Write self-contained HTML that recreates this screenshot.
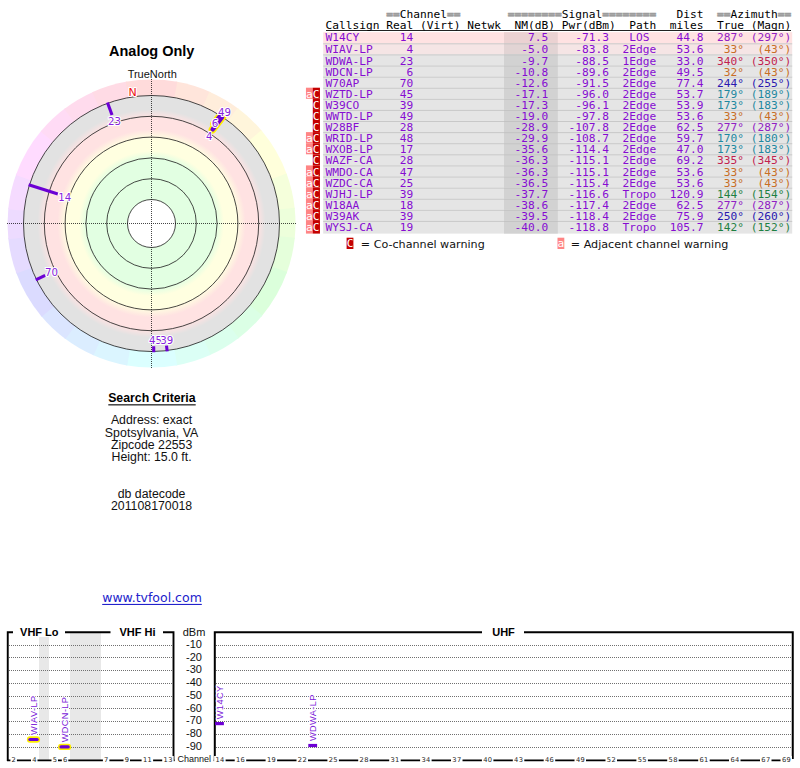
<!DOCTYPE html>
<html lang="en"><head><meta charset="utf-8"><title>TV Fool - Analog Only</title>
<style>
html,body{margin:0;padding:0;background:#fff;}
body{width:800px;height:768px;overflow:hidden;position:relative;}
svg{position:absolute;left:0;top:0;display:block;}
.ar{font-family:"Liberation Sans",sans-serif;}
.dj{font-family:"DejaVu Sans","Liberation Sans",sans-serif;}
.mono{font-family:"DejaVu Sans Mono","Liberation Mono",monospace;font-size:10.0px;}
.halo{paint-order:stroke;stroke:#fff;stroke-width:2.2px;stroke-linejoin:round;}
</style></head><body>
<svg width="800" height="768" viewBox="0 0 800 768">
<defs>
<radialGradient id="zones" gradientUnits="userSpaceOnUse" cx="151.5" cy="223.5" r="128">
<stop offset="0.0000" stop-color="#E2FFE2"/>
<stop offset="0.5078" stop-color="#E2FFE2"/>
<stop offset="0.5664" stop-color="#FFFFE0"/>
<stop offset="0.6641" stop-color="#FFFFE0"/>
<stop offset="0.7344" stop-color="#FFE2E2"/>
<stop offset="0.8281" stop-color="#FFE2E2"/>
<stop offset="0.8906" stop-color="#E2E2E2"/>
<stop offset="1.0000" stop-color="#E2E2E2"/>
</radialGradient>
</defs>
<g id="radar">
<path d="M151.50 223.50 L175.76 81.56 A144 144 0 0 1 210.76 92.26 Z" fill="#FFE5DB"/>
<path d="M151.50 223.50 L209.38 91.64 A144 144 0 0 1 238.76 108.95 Z" fill="#FFEDDB"/>
<path d="M151.50 223.50 L237.56 108.04 A144 144 0 0 1 262.29 131.52 Z" fill="#FFF5DB"/>
<path d="M151.50 223.50 L261.32 130.36 A144 144 0 0 1 287.07 174.96 Z" fill="#FFFFDB"/>
<path d="M151.50 223.50 L286.56 173.54 A144 144 0 0 1 294.79 209.20 Z" fill="#F5FFDB"/>
<path d="M151.50 223.50 L294.63 207.70 A144 144 0 0 1 294.63 239.30 Z" fill="#EDFFDB"/>
<path d="M151.50 223.50 L294.79 237.80 A144 144 0 0 1 286.56 273.46 Z" fill="#E5FFDB"/>
<path d="M151.50 223.50 L287.07 272.04 A144 144 0 0 1 261.32 316.64 Z" fill="#DBFFDB"/>
<path d="M151.50 223.50 L262.29 315.48 A144 144 0 0 1 237.56 338.96 Z" fill="#DBFFE5"/>
<path d="M151.50 223.50 L238.76 338.05 A144 144 0 0 1 209.38 355.36 Z" fill="#DBFFED"/>
<path d="M151.50 223.50 L210.76 354.74 A144 144 0 0 1 175.76 365.44 Z" fill="#DBFFF5"/>
<path d="M151.50 223.50 L177.25 365.18 A144 144 0 0 1 125.75 365.18 Z" fill="#DBFFFF"/>
<path d="M151.50 223.50 L127.24 365.44 A144 144 0 0 1 92.24 354.74 Z" fill="#DBF5FF"/>
<path d="M151.50 223.50 L93.62 355.36 A144 144 0 0 1 64.24 338.05 Z" fill="#DBEDFF"/>
<path d="M151.50 223.50 L65.44 338.96 A144 144 0 0 1 40.71 315.48 Z" fill="#DBE5FF"/>
<path d="M151.50 223.50 L41.68 316.64 A144 144 0 0 1 15.93 272.04 Z" fill="#DBDBFF"/>
<path d="M151.50 223.50 L16.44 273.46 A144 144 0 0 1 8.21 237.80 Z" fill="#E5DBFF"/>
<path d="M151.50 223.50 L8.37 239.30 A144 144 0 0 1 8.37 207.70 Z" fill="#EDDBFF"/>
<path d="M151.50 223.50 L8.21 209.20 A144 144 0 0 1 16.44 173.54 Z" fill="#F5DBFF"/>
<path d="M151.50 223.50 L15.93 174.96 A144 144 0 0 1 41.68 130.36 Z" fill="#FFDBFF"/>
<path d="M151.50 223.50 L40.71 131.52 A144 144 0 0 1 65.44 108.04 Z" fill="#FFDBF5"/>
<path d="M151.50 223.50 L64.24 108.95 A144 144 0 0 1 93.62 91.64 Z" fill="#FFDBED"/>
<path d="M151.50 223.50 L92.24 92.26 A144 144 0 0 1 127.24 81.56 Z" fill="#FFDBE5"/>
<path d="M151.50 223.50 L125.75 81.82 A144 144 0 0 1 177.25 81.82 Z" fill="#FFDBDB"/>
<circle cx="151.5" cy="223.5" r="128" fill="url(#zones)"/>
<circle cx="151.5" cy="223.5" r="24" fill="#fff"/>
<circle cx="151.5" cy="223.5" r="24" fill="none" stroke="#1A1A1A" stroke-width="0.8"/>
<circle cx="151.5" cy="223.5" r="44.8" fill="none" stroke="#1A1A1A" stroke-width="0.8"/>
<circle cx="151.5" cy="223.5" r="65.6" fill="none" stroke="#1A1A1A" stroke-width="0.8"/>
<circle cx="151.5" cy="223.5" r="86.4" fill="none" stroke="#1A1A1A" stroke-width="0.8"/>
<circle cx="151.5" cy="223.5" r="107.2" fill="none" stroke="#1A1A1A" stroke-width="0.8"/>
<circle cx="151.5" cy="223.5" r="128" fill="none" stroke="#1A1A1A" stroke-width="0.8"/>
<line x1="7" y1="223.5" x2="296" y2="223.5" stroke="#000" stroke-opacity="0.72" stroke-width="1" stroke-dasharray="1 1" shape-rendering="crispEdges"/>
<line x1="151.5" y1="79" x2="151.5" y2="368" stroke="#000" stroke-opacity="0.72" stroke-width="1" stroke-dasharray="1 1" shape-rendering="crispEdges"/>
<line x1="222.33" y1="116.89" x2="212.45" y2="129.65" stroke="#FFEE00" stroke-width="7.6" stroke-linecap="round"/>
<line x1="220.46" y1="115.67" x2="213.87" y2="123.68" stroke="#FFEE00" stroke-width="7.6" stroke-linecap="round"/>
<line x1="28.66" y1="184.77" x2="57.84" y2="193.97" stroke="#6C00D4" stroke-width="3.1" stroke-linecap="butt"/>
<line x1="222.11" y1="117.22" x2="212.66" y2="129.32" stroke="#6C00D4" stroke-width="4.4" stroke-linecap="round"/>
<line x1="107.45" y1="102.47" x2="112.03" y2="115.06" stroke="#6C00D4" stroke-width="3.1" stroke-linecap="butt"/>
<line x1="220.25" y1="116.00" x2="214.08" y2="123.35" stroke="#6C00D4" stroke-width="4.4" stroke-linecap="round"/>
<line x1="35.74" y1="279.96" x2="45.17" y2="275.36" stroke="#6C00D4" stroke-width="3.1" stroke-linecap="butt"/>
<line x1="153.75" y1="352.28" x2="153.64" y2="346.28" stroke="#6C00D4" stroke-width="3.1" stroke-linecap="butt"/>
<line x1="167.20" y1="351.34" x2="166.49" y2="345.58" stroke="#6C00D4" stroke-width="3.1" stroke-linecap="butt"/>
<line x1="221.65" y1="115.48" x2="219.42" y2="118.92" stroke="#6C00D4" stroke-width="3.1" stroke-linecap="butt"/>
<g class="dj halo" font-size="10.2" fill="#8822DD" text-anchor="middle">
<text x="64.8" y="200.7">14</text>
<text x="114.5" y="124.9">23</text>
<text x="51.5" y="276.3">70</text>
<text x="155.6" y="343.7">45</text>
<text x="166.7" y="343.7">39</text>
<text x="209.3" y="140.1">4</text>
<text x="224.6" y="116.3">49</text>
<text x="215.0" y="127.3">6</text>
</g>
<text class="dj halo" x="132.7" y="95.8" font-size="11" fill="#EE1111" text-anchor="middle">N</text>
</g>
<text class="ar" x="151.7" y="56.3" font-size="14.5" font-weight="bold" text-anchor="middle" fill="#000">Analog Only</text>
<text class="ar" x="152.2" y="77.7" font-size="11" text-anchor="middle" fill="#111">TrueNorth</text>
<text class="ar" x="151.9" y="402" font-size="12.3" font-weight="bold" text-anchor="middle" fill="#000">Search Criteria</text>
<rect x="108.3" y="404.3" width="87.4" height="1.1" fill="#000"/>
<text class="ar" x="151.6" y="423.8" font-size="12.3" text-anchor="middle" fill="#111">Address: exact</text>
<text class="ar" x="151.6" y="437.2" font-size="12.3" letter-spacing="0.1" text-anchor="middle" fill="#111">Spotsylvania, VA</text>
<text class="ar" x="151.6" y="449.1" font-size="12.3" text-anchor="middle" fill="#111">Zipcode 22553</text>
<text class="ar" x="151.6" y="460.5" font-size="12.3" text-anchor="middle" fill="#111">Height: 15.0 ft.</text>
<text class="ar" x="151.6" y="497.5" font-size="12.3" text-anchor="middle" fill="#111">db datecode</text>
<text class="ar" x="151.6" y="509.6" font-size="12.3" text-anchor="middle" fill="#111">201108170018</text>
<a href="#"><text class="dj" x="152" y="602" font-size="12.5" text-anchor="middle" fill="#2222CC">www.tvfool.com</text></a>
<rect x="102.2" y="603.9" width="99.6" height="1.1" fill="#2222CC"/>
<rect x="323.2" y="32.20" width="469.00000000000006" height="11.10" fill="#FFE2E2"/>
<rect x="504.0" y="32.20" width="53.799999999999955" height="11.10" fill="#EBD2D2"/>
<rect x="323.2" y="43.30" width="469.00000000000006" height="11.10" fill="#F5E5E5"/>
<rect x="504.0" y="43.30" width="53.799999999999955" height="11.10" fill="#E2D4D4"/>
<rect x="323.2" y="43.30" width="469.00000000000006" height="1" fill="#BDBDBD" opacity="0.75"/>
<rect x="323.2" y="54.40" width="469.00000000000006" height="11.10" fill="#E5E5E5"/>
<rect x="504.0" y="54.40" width="53.799999999999955" height="11.10" fill="#D2D2D2"/>
<rect x="323.2" y="54.40" width="469.00000000000006" height="1" fill="#BDBDBD" opacity="0.75"/>
<rect x="323.2" y="65.50" width="469.00000000000006" height="11.10" fill="#E5E5E5"/>
<rect x="504.0" y="65.50" width="53.799999999999955" height="11.10" fill="#D2D2D2"/>
<rect x="323.2" y="65.50" width="469.00000000000006" height="1" fill="#BDBDBD" opacity="0.75"/>
<rect x="323.2" y="76.60" width="469.00000000000006" height="11.10" fill="#E5E5E5"/>
<rect x="504.0" y="76.60" width="53.799999999999955" height="11.10" fill="#D2D2D2"/>
<rect x="323.2" y="76.60" width="469.00000000000006" height="1" fill="#BDBDBD" opacity="0.75"/>
<rect x="323.2" y="87.70" width="469.00000000000006" height="11.10" fill="#E5E5E5"/>
<rect x="504.0" y="87.70" width="53.799999999999955" height="11.10" fill="#D2D2D2"/>
<rect x="323.2" y="87.70" width="469.00000000000006" height="1" fill="#BDBDBD" opacity="0.75"/>
<rect x="305.95" y="87.70" width="6.95" height="11.10" fill="#FF8585"/>
<rect x="312.80" y="87.70" width="7.15" height="11.10" fill="#C40000"/>
<rect x="323.2" y="98.80" width="469.00000000000006" height="11.10" fill="#E5E5E5"/>
<rect x="504.0" y="98.80" width="53.799999999999955" height="11.10" fill="#D2D2D2"/>
<rect x="323.2" y="98.80" width="469.00000000000006" height="1" fill="#BDBDBD" opacity="0.75"/>
<rect x="312.80" y="98.80" width="7.15" height="11.10" fill="#C40000"/>
<rect x="323.2" y="109.90" width="469.00000000000006" height="11.10" fill="#E5E5E5"/>
<rect x="504.0" y="109.90" width="53.799999999999955" height="11.10" fill="#D2D2D2"/>
<rect x="323.2" y="109.90" width="469.00000000000006" height="1" fill="#BDBDBD" opacity="0.75"/>
<rect x="312.80" y="109.90" width="7.15" height="11.10" fill="#C40000"/>
<rect x="323.2" y="121.00" width="469.00000000000006" height="11.10" fill="#E5E5E5"/>
<rect x="504.0" y="121.00" width="53.799999999999955" height="11.10" fill="#D2D2D2"/>
<rect x="323.2" y="121.00" width="469.00000000000006" height="1" fill="#BDBDBD" opacity="0.75"/>
<rect x="312.80" y="121.00" width="7.15" height="11.10" fill="#C40000"/>
<rect x="323.2" y="132.10" width="469.00000000000006" height="11.10" fill="#E5E5E5"/>
<rect x="504.0" y="132.10" width="53.799999999999955" height="11.10" fill="#D2D2D2"/>
<rect x="323.2" y="132.10" width="469.00000000000006" height="1" fill="#BDBDBD" opacity="0.75"/>
<rect x="305.95" y="132.10" width="6.95" height="11.10" fill="#FF8585"/>
<rect x="312.80" y="132.10" width="7.15" height="11.10" fill="#C40000"/>
<rect x="323.2" y="143.20" width="469.00000000000006" height="11.10" fill="#E5E5E5"/>
<rect x="504.0" y="143.20" width="53.799999999999955" height="11.10" fill="#D2D2D2"/>
<rect x="323.2" y="143.20" width="469.00000000000006" height="1" fill="#BDBDBD" opacity="0.75"/>
<rect x="305.95" y="143.20" width="6.95" height="11.10" fill="#FF8585"/>
<rect x="312.80" y="143.20" width="7.15" height="11.10" fill="#C40000"/>
<rect x="323.2" y="154.30" width="469.00000000000006" height="11.10" fill="#E5E5E5"/>
<rect x="504.0" y="154.30" width="53.799999999999955" height="11.10" fill="#D2D2D2"/>
<rect x="323.2" y="154.30" width="469.00000000000006" height="1" fill="#BDBDBD" opacity="0.75"/>
<rect x="312.80" y="154.30" width="7.15" height="11.10" fill="#C40000"/>
<rect x="323.2" y="165.40" width="469.00000000000006" height="11.10" fill="#E5E5E5"/>
<rect x="504.0" y="165.40" width="53.799999999999955" height="11.10" fill="#D2D2D2"/>
<rect x="323.2" y="165.40" width="469.00000000000006" height="1" fill="#BDBDBD" opacity="0.75"/>
<rect x="305.95" y="165.40" width="6.95" height="11.10" fill="#FF8585"/>
<rect x="312.80" y="165.40" width="7.15" height="11.10" fill="#C40000"/>
<rect x="323.2" y="176.50" width="469.00000000000006" height="11.10" fill="#E5E5E5"/>
<rect x="504.0" y="176.50" width="53.799999999999955" height="11.10" fill="#D2D2D2"/>
<rect x="323.2" y="176.50" width="469.00000000000006" height="1" fill="#BDBDBD" opacity="0.75"/>
<rect x="305.95" y="176.50" width="6.95" height="11.10" fill="#FF8585"/>
<rect x="312.80" y="176.50" width="7.15" height="11.10" fill="#C40000"/>
<rect x="323.2" y="187.60" width="469.00000000000006" height="11.10" fill="#E5E5E5"/>
<rect x="504.0" y="187.60" width="53.799999999999955" height="11.10" fill="#D2D2D2"/>
<rect x="323.2" y="187.60" width="469.00000000000006" height="1" fill="#BDBDBD" opacity="0.75"/>
<rect x="305.95" y="187.60" width="6.95" height="11.10" fill="#FF8585"/>
<rect x="312.80" y="187.60" width="7.15" height="11.10" fill="#C40000"/>
<rect x="323.2" y="198.70" width="469.00000000000006" height="11.10" fill="#E5E5E5"/>
<rect x="504.0" y="198.70" width="53.799999999999955" height="11.10" fill="#D2D2D2"/>
<rect x="323.2" y="198.70" width="469.00000000000006" height="1" fill="#BDBDBD" opacity="0.75"/>
<rect x="305.95" y="198.70" width="6.95" height="11.10" fill="#FF8585"/>
<rect x="312.80" y="198.70" width="7.15" height="11.10" fill="#C40000"/>
<rect x="323.2" y="209.80" width="469.00000000000006" height="11.10" fill="#E5E5E5"/>
<rect x="504.0" y="209.80" width="53.799999999999955" height="11.10" fill="#D2D2D2"/>
<rect x="323.2" y="209.80" width="469.00000000000006" height="1" fill="#BDBDBD" opacity="0.75"/>
<rect x="305.95" y="209.80" width="6.95" height="11.10" fill="#FF8585"/>
<rect x="312.80" y="209.80" width="7.15" height="11.10" fill="#C40000"/>
<rect x="323.2" y="220.90" width="469.00000000000006" height="12.70" fill="#E5E5E5"/>
<rect x="504.0" y="220.90" width="53.799999999999955" height="12.70" fill="#D2D2D2"/>
<rect x="323.2" y="220.90" width="469.00000000000006" height="1" fill="#BDBDBD" opacity="0.75"/>
<rect x="305.95" y="220.90" width="6.95" height="12.70" fill="#FF8585"/>
<rect x="312.80" y="220.90" width="7.15" height="12.70" fill="#C40000"/>
<rect x="326" y="30" width="465" height="1" fill="#222"/>
<g class="mono" transform="scale(1.12117,1)">
<g fill="#000">
<text x="344.60" y="17.70" fill="#9C9C9C" font-weight="bold" stroke="#9C9C9C" stroke-width="0.55">==</text><text x="356.64" y="17.70">Channel</text><text x="398.78" y="17.70" fill="#9C9C9C" font-weight="bold" stroke="#9C9C9C" stroke-width="0.55">==</text>
<text x="452.96" y="17.70" fill="#9C9C9C" font-weight="bold" stroke="#9C9C9C" stroke-width="0.55">========</text><text x="501.13" y="17.70">Signal</text><text x="537.25" y="17.70" fill="#9C9C9C" font-weight="bold" stroke="#9C9C9C" stroke-width="0.55">========</text>
<text x="603.48" y="17.70">Dist</text>
<text x="639.60" y="17.70" fill="#9C9C9C" font-weight="bold" stroke="#9C9C9C" stroke-width="0.55">==</text><text x="651.64" y="17.70">Azimuth</text><text x="693.78" y="17.70" fill="#9C9C9C" font-weight="bold" stroke="#9C9C9C" stroke-width="0.55">==</text>
<text x="290.41" y="28.90">Callsign</text><text x="344.60" y="28.90">Real</text><text x="374.70" y="28.90">(Virt)</text><text x="416.84" y="28.90">Netwk</text><text x="458.99" y="28.90">NM(dB)</text><text x="501.13" y="28.90">Pwr(dBm)</text><text x="561.33" y="28.90">Path</text><text x="597.46" y="28.90">miles</text><text x="639.60" y="28.90">True</text><text x="669.70" y="28.90">(Magn)</text>
</g>
<g fill="#860CD2">
<text x="290.41" y="41.00">W14CY</text><text x="356.64" y="41.00">14</text><text x="471.03" y="41.00">7.5</text><text x="513.17" y="41.00">-71.3</text><text x="561.33" y="41.00">LOS</text><text x="603.48" y="41.00">44.8</text><text x="639.60" y="41.00" fill="#9020C4">287°</text><text x="669.70" y="41.00" fill="#9020C4">(297°)</text>
<text x="290.41" y="53.50">WIAV-LP</text><text x="362.66" y="53.50">4</text><text x="465.01" y="53.50">-5.0</text><text x="513.17" y="53.50">-83.8</text><text x="555.31" y="53.50">2Edge</text><text x="603.48" y="53.50">53.6</text><text x="645.62" y="53.50" fill="#C86E26">33°</text><text x="675.72" y="53.50" fill="#C86E26">(43°)</text>
<text x="290.41" y="64.60">WDWA-LP</text><text x="356.64" y="64.60">23</text><text x="465.01" y="64.60">-9.7</text><text x="513.17" y="64.60">-88.5</text><text x="555.31" y="64.60">1Edge</text><text x="603.48" y="64.60">33.0</text><text x="639.60" y="64.60" fill="#C21E50">340°</text><text x="669.70" y="64.60" fill="#C21E50">(350°)</text>
<text x="290.41" y="75.70">WDCN-LP</text><text x="362.66" y="75.70">6</text><text x="458.99" y="75.70">-10.8</text><text x="513.17" y="75.70">-89.6</text><text x="555.31" y="75.70">2Edge</text><text x="603.48" y="75.70">49.5</text><text x="645.62" y="75.70" fill="#C86E26">32°</text><text x="675.72" y="75.70" fill="#C86E26">(43°)</text>
<text x="290.41" y="86.80">W70AP</text><text x="356.64" y="86.80">70</text><text x="458.99" y="86.80">-12.6</text><text x="513.17" y="86.80">-91.5</text><text x="555.31" y="86.80">2Edge</text><text x="603.48" y="86.80">77.4</text><text x="639.60" y="86.80" fill="#2A18B0">244°</text><text x="669.70" y="86.80" fill="#2A18B0">(255°)</text>
<text x="272.95" y="97.90" fill="#fff">a</text><text x="278.97" y="97.90" fill="#fff">C</text><text x="290.41" y="97.90">WZTD-LP</text><text x="356.64" y="97.90">45</text><text x="458.99" y="97.90">-17.1</text><text x="513.17" y="97.90">-96.0</text><text x="555.31" y="97.90">2Edge</text><text x="603.48" y="97.90">53.7</text><text x="639.60" y="97.90" fill="#1E88A0">179°</text><text x="669.70" y="97.90" fill="#1E88A0">(189°)</text>
<text x="278.97" y="109.00" fill="#fff">C</text><text x="290.41" y="109.00">W39CO</text><text x="356.64" y="109.00">39</text><text x="458.99" y="109.00">-17.3</text><text x="513.17" y="109.00">-96.1</text><text x="555.31" y="109.00">2Edge</text><text x="603.48" y="109.00">53.9</text><text x="639.60" y="109.00" fill="#1E88A0">173°</text><text x="669.70" y="109.00" fill="#1E88A0">(183°)</text>
<text x="278.97" y="120.10" fill="#fff">C</text><text x="290.41" y="120.10">WWTD-LP</text><text x="356.64" y="120.10">49</text><text x="458.99" y="120.10">-19.0</text><text x="513.17" y="120.10">-97.8</text><text x="555.31" y="120.10">2Edge</text><text x="603.48" y="120.10">53.6</text><text x="645.62" y="120.10" fill="#C86E26">33°</text><text x="675.72" y="120.10" fill="#C86E26">(43°)</text>
<text x="278.97" y="131.20" fill="#fff">C</text><text x="290.41" y="131.20">W28BF</text><text x="356.64" y="131.20">28</text><text x="458.99" y="131.20">-28.9</text><text x="507.15" y="131.20">-107.8</text><text x="555.31" y="131.20">2Edge</text><text x="603.48" y="131.20">62.5</text><text x="639.60" y="131.20" fill="#9020C4">277°</text><text x="669.70" y="131.20" fill="#9020C4">(287°)</text>
<text x="272.95" y="142.30" fill="#fff">a</text><text x="278.97" y="142.30" fill="#fff">C</text><text x="290.41" y="142.30">WRID-LP</text><text x="356.64" y="142.30">48</text><text x="458.99" y="142.30">-29.9</text><text x="507.15" y="142.30">-108.7</text><text x="555.31" y="142.30">2Edge</text><text x="603.48" y="142.30">59.7</text><text x="639.60" y="142.30" fill="#1E88A0">170°</text><text x="669.70" y="142.30" fill="#1E88A0">(180°)</text>
<text x="272.95" y="153.40" fill="#fff">a</text><text x="278.97" y="153.40" fill="#fff">C</text><text x="290.41" y="153.40">WXOB-LP</text><text x="356.64" y="153.40">17</text><text x="458.99" y="153.40">-35.6</text><text x="507.15" y="153.40">-114.4</text><text x="555.31" y="153.40">2Edge</text><text x="603.48" y="153.40">47.0</text><text x="639.60" y="153.40" fill="#1E88A0">173°</text><text x="669.70" y="153.40" fill="#1E88A0">(183°)</text>
<text x="278.97" y="164.50" fill="#fff">C</text><text x="290.41" y="164.50">WAZF-CA</text><text x="356.64" y="164.50">28</text><text x="458.99" y="164.50">-36.3</text><text x="507.15" y="164.50">-115.1</text><text x="555.31" y="164.50">2Edge</text><text x="603.48" y="164.50">69.2</text><text x="639.60" y="164.50" fill="#C21E50">335°</text><text x="669.70" y="164.50" fill="#C21E50">(345°)</text>
<text x="272.95" y="175.60" fill="#fff">a</text><text x="278.97" y="175.60" fill="#fff">C</text><text x="290.41" y="175.60">WMDO-CA</text><text x="356.64" y="175.60">47</text><text x="458.99" y="175.60">-36.3</text><text x="507.15" y="175.60">-115.1</text><text x="555.31" y="175.60">2Edge</text><text x="603.48" y="175.60">53.6</text><text x="645.62" y="175.60" fill="#C86E26">33°</text><text x="675.72" y="175.60" fill="#C86E26">(43°)</text>
<text x="272.95" y="186.70" fill="#fff">a</text><text x="278.97" y="186.70" fill="#fff">C</text><text x="290.41" y="186.70">WZDC-CA</text><text x="356.64" y="186.70">25</text><text x="458.99" y="186.70">-36.5</text><text x="507.15" y="186.70">-115.4</text><text x="555.31" y="186.70">2Edge</text><text x="603.48" y="186.70">53.6</text><text x="645.62" y="186.70" fill="#C86E26">33°</text><text x="675.72" y="186.70" fill="#C86E26">(43°)</text>
<text x="272.95" y="197.80" fill="#fff">a</text><text x="278.97" y="197.80" fill="#fff">C</text><text x="290.41" y="197.80">WJHJ-LP</text><text x="356.64" y="197.80">39</text><text x="458.99" y="197.80">-37.7</text><text x="507.15" y="197.80">-116.6</text><text x="555.31" y="197.80">Tropo</text><text x="597.46" y="197.80">120.9</text><text x="639.60" y="197.80" fill="#1E8042">144°</text><text x="669.70" y="197.80" fill="#1E8042">(154°)</text>
<text x="272.95" y="208.90" fill="#fff">a</text><text x="278.97" y="208.90" fill="#fff">C</text><text x="290.41" y="208.90">W18AA</text><text x="356.64" y="208.90">18</text><text x="458.99" y="208.90">-38.6</text><text x="507.15" y="208.90">-117.4</text><text x="555.31" y="208.90">2Edge</text><text x="603.48" y="208.90">62.5</text><text x="639.60" y="208.90" fill="#9020C4">277°</text><text x="669.70" y="208.90" fill="#9020C4">(287°)</text>
<text x="272.95" y="220.00" fill="#fff">a</text><text x="278.97" y="220.00" fill="#fff">C</text><text x="290.41" y="220.00">W39AK</text><text x="356.64" y="220.00">39</text><text x="458.99" y="220.00">-39.5</text><text x="507.15" y="220.00">-118.4</text><text x="555.31" y="220.00">2Edge</text><text x="603.48" y="220.00">75.9</text><text x="639.60" y="220.00" fill="#2A18B0">250°</text><text x="669.70" y="220.00" fill="#2A18B0">(260°)</text>
<text x="272.95" y="231.10" fill="#fff">a</text><text x="278.97" y="231.10" fill="#fff">C</text><text x="290.41" y="231.10">WYSJ-CA</text><text x="356.64" y="231.10">19</text><text x="458.99" y="231.10">-40.0</text><text x="507.15" y="231.10">-118.8</text><text x="555.31" y="231.10">Tropo</text><text x="597.46" y="231.10">105.7</text><text x="639.60" y="231.10" fill="#1E8042">142°</text><text x="669.70" y="231.10" fill="#1E8042">(152°)</text>
</g>
</g>
<rect x="346.6" y="237.7" width="6.8" height="11.3" fill="#C40000"/>
<text class="mono" transform="scale(1.12117,1)" x="309.23" y="247.4" fill="#fff">C</text>
<text class="dj" x="360.8" y="248" font-size="11.15" fill="#111">= Co-channel warning</text>
<rect x="557.5" y="237.7" width="6.8" height="11.3" fill="#FF8585"/>
<text class="mono" transform="scale(1.12117,1)" x="497.34" y="247.4" fill="#fff">a</text>
<text class="dj" x="570.8" y="248" font-size="11.15" fill="#111">= Adjacent channel warning</text>
<rect x="39" y="633" width="10" height="127" fill="#E8E8E8"/>
<rect x="70" y="633" width="31" height="127" fill="#E8E8E8"/>
<line x1="9" y1="645.5" x2="173" y2="645.5" stroke="#707070" stroke-width="1" stroke-dasharray="1 1" shape-rendering="crispEdges"/>
<line x1="216" y1="645.5" x2="792" y2="645.5" stroke="#707070" stroke-width="1" stroke-dasharray="1 1" shape-rendering="crispEdges"/>
<line x1="9" y1="657.5" x2="173" y2="657.5" stroke="#707070" stroke-width="1" stroke-dasharray="1 1" shape-rendering="crispEdges"/>
<line x1="216" y1="657.5" x2="792" y2="657.5" stroke="#707070" stroke-width="1" stroke-dasharray="1 1" shape-rendering="crispEdges"/>
<line x1="9" y1="670.5" x2="173" y2="670.5" stroke="#707070" stroke-width="1" stroke-dasharray="1 1" shape-rendering="crispEdges"/>
<line x1="216" y1="670.5" x2="792" y2="670.5" stroke="#707070" stroke-width="1" stroke-dasharray="1 1" shape-rendering="crispEdges"/>
<line x1="9" y1="683.5" x2="173" y2="683.5" stroke="#707070" stroke-width="1" stroke-dasharray="1 1" shape-rendering="crispEdges"/>
<line x1="216" y1="683.5" x2="792" y2="683.5" stroke="#707070" stroke-width="1" stroke-dasharray="1 1" shape-rendering="crispEdges"/>
<line x1="9" y1="696.5" x2="173" y2="696.5" stroke="#707070" stroke-width="1" stroke-dasharray="1 1" shape-rendering="crispEdges"/>
<line x1="216" y1="696.5" x2="792" y2="696.5" stroke="#707070" stroke-width="1" stroke-dasharray="1 1" shape-rendering="crispEdges"/>
<line x1="9" y1="708.5" x2="173" y2="708.5" stroke="#707070" stroke-width="1" stroke-dasharray="1 1" shape-rendering="crispEdges"/>
<line x1="216" y1="708.5" x2="792" y2="708.5" stroke="#707070" stroke-width="1" stroke-dasharray="1 1" shape-rendering="crispEdges"/>
<line x1="9" y1="721.5" x2="173" y2="721.5" stroke="#707070" stroke-width="1" stroke-dasharray="1 1" shape-rendering="crispEdges"/>
<line x1="216" y1="721.5" x2="792" y2="721.5" stroke="#707070" stroke-width="1" stroke-dasharray="1 1" shape-rendering="crispEdges"/>
<line x1="9" y1="734.5" x2="173" y2="734.5" stroke="#707070" stroke-width="1" stroke-dasharray="1 1" shape-rendering="crispEdges"/>
<line x1="216" y1="734.5" x2="792" y2="734.5" stroke="#707070" stroke-width="1" stroke-dasharray="1 1" shape-rendering="crispEdges"/>
<line x1="9" y1="747.5" x2="173" y2="747.5" stroke="#707070" stroke-width="1" stroke-dasharray="1 1" shape-rendering="crispEdges"/>
<line x1="216" y1="747.5" x2="792" y2="747.5" stroke="#707070" stroke-width="1" stroke-dasharray="1 1" shape-rendering="crispEdges"/>
<path d="M7.75 761 V632.3 H173.5 V761" fill="none" stroke="#000" stroke-width="1.9"/>
<path d="M214.8 761 V632.3 H792.75 V759" fill="none" stroke="#000" stroke-width="2"/>
<line x1="7" y1="760.3" x2="174.5" y2="760.3" stroke="#000" stroke-width="1.7"/>
<line x1="213.8" y1="760.3" x2="791" y2="760.3" stroke="#000" stroke-width="1.7"/>
<rect x="13" y="626" width="52" height="11" fill="#fff"/>
<text class="ar" x="39.3" y="636" font-size="11" font-weight="bold" text-anchor="middle" fill="#000">VHF Lo</text>
<rect x="110.5" y="626" width="52.5" height="11" fill="#fff"/>
<text class="ar" x="137.5" y="636" font-size="11" font-weight="bold" text-anchor="middle" fill="#000">VHF Hi</text>
<rect x="482" y="626" width="42" height="11" fill="#fff"/>
<text class="ar" x="503.5" y="636" font-size="11" font-weight="bold" text-anchor="middle" fill="#000">UHF</text>
<text class="ar" x="194" y="636" font-size="11" text-anchor="middle" fill="#111">dBm</text>
<text class="ar" x="202" y="647.8" font-size="11" text-anchor="end" fill="#111">-10</text>
<text class="ar" x="202" y="660.5" font-size="11" text-anchor="end" fill="#111">-20</text>
<text class="ar" x="202" y="673.3" font-size="11" text-anchor="end" fill="#111">-30</text>
<text class="ar" x="202" y="686.0" font-size="11" text-anchor="end" fill="#111">-40</text>
<text class="ar" x="202" y="698.8" font-size="11" text-anchor="end" fill="#111">-50</text>
<text class="ar" x="202" y="711.5" font-size="11" text-anchor="end" fill="#111">-60</text>
<text class="ar" x="202" y="724.3" font-size="11" text-anchor="end" fill="#111">-70</text>
<text class="ar" x="202" y="737.0" font-size="11" text-anchor="end" fill="#111">-80</text>
<text class="ar" x="202" y="749.8" font-size="11" text-anchor="end" fill="#111">-90</text>
<text class="ar" x="194.3" y="762" font-size="9" text-anchor="middle" fill="#111">Channel</text>
<rect x="10.4" y="756" width="6.5" height="8" fill="#fff"/>
<rect x="31.0" y="756" width="6.5" height="8" fill="#fff"/>
<rect x="51.5" y="756" width="6.5" height="8" fill="#fff"/>
<rect x="61.8" y="756" width="6.5" height="8" fill="#fff"/>
<rect x="102.9" y="756" width="6.5" height="8" fill="#fff"/>
<rect x="123.5" y="756" width="6.5" height="8" fill="#fff"/>
<rect x="141.6" y="756" width="11.5" height="8" fill="#fff"/>
<rect x="162.2" y="756" width="11.5" height="8" fill="#fff"/>
<rect x="234.7" y="756" width="11.5" height="8" fill="#fff"/>
<rect x="265.6" y="756" width="11.5" height="8" fill="#fff"/>
<rect x="296.5" y="756" width="11.5" height="8" fill="#fff"/>
<rect x="327.4" y="756" width="11.5" height="8" fill="#fff"/>
<rect x="358.2" y="756" width="11.5" height="8" fill="#fff"/>
<rect x="389.2" y="756" width="11.5" height="8" fill="#fff"/>
<rect x="420.1" y="756" width="11.5" height="8" fill="#fff"/>
<rect x="451.0" y="756" width="11.5" height="8" fill="#fff"/>
<rect x="481.9" y="756" width="11.5" height="8" fill="#fff"/>
<rect x="512.8" y="756" width="11.5" height="8" fill="#fff"/>
<rect x="543.7" y="756" width="11.5" height="8" fill="#fff"/>
<rect x="574.5" y="756" width="11.5" height="8" fill="#fff"/>
<rect x="605.5" y="756" width="11.5" height="8" fill="#fff"/>
<rect x="636.4" y="756" width="11.5" height="8" fill="#fff"/>
<rect x="667.2" y="756" width="11.5" height="8" fill="#fff"/>
<rect x="698.2" y="756" width="11.5" height="8" fill="#fff"/>
<rect x="729.0" y="756" width="11.5" height="8" fill="#fff"/>
<rect x="760.0" y="756" width="11.5" height="8" fill="#fff"/>
<rect x="214.1" y="756" width="11.5" height="8" fill="#fff"/>
<rect x="780.5" y="756" width="11.5" height="8" fill="#fff"/>
<g class="dj" font-size="6.7" letter-spacing="0.35" fill="#222" text-anchor="middle">
<text x="13.8" y="762.4">2</text>
<text x="34.5" y="762.4">4</text>
<text x="55.0" y="762.4">5</text>
<text x="65.2" y="762.4">6</text>
<text x="106.4" y="762.4">7</text>
<text x="127.0" y="762.4">9</text>
<text x="147.5" y="762.4">11</text>
<text x="168.2" y="762.4">13</text>
<text x="240.6" y="762.4">16</text>
<text x="271.5" y="762.4">19</text>
<text x="302.4" y="762.4">22</text>
<text x="333.3" y="762.4">25</text>
<text x="364.2" y="762.4">28</text>
<text x="395.1" y="762.4">31</text>
<text x="426.0" y="762.4">34</text>
<text x="456.9" y="762.4">37</text>
<text x="487.8" y="762.4">40</text>
<text x="518.7" y="762.4">43</text>
<text x="549.6" y="762.4">46</text>
<text x="580.5" y="762.4">49</text>
<text x="611.4" y="762.4">52</text>
<text x="642.3" y="762.4">55</text>
<text x="673.2" y="762.4">58</text>
<text x="704.1" y="762.4">61</text>
<text x="735.0" y="762.4">64</text>
<text x="765.9" y="762.4">67</text>
<text x="220.0" y="762.4">14</text>
<text x="786.5" y="762.4">69</text>
</g>
<line x1="30.1" y1="739.5" x2="36.9" y2="739.5" stroke="#FFEE00" stroke-width="6.4" stroke-linecap="round"/>
<line x1="61.2" y1="746.9" x2="68.0" y2="746.9" stroke="#FFEE00" stroke-width="6.4" stroke-linecap="round"/>
<line x1="29.9" y1="739.5" x2="37.1" y2="739.5" stroke="#6C00D4" stroke-width="3.2" stroke-linecap="round"/>
<text class="ar halo" font-size="9.2" letter-spacing="0.4" fill="#7A18D8" transform="translate(36.8,734.9) rotate(-90)" x="0" y="0">WIAV-LP</text>
<line x1="61.0" y1="746.9" x2="68.2" y2="746.9" stroke="#6C00D4" stroke-width="3.2" stroke-linecap="round"/>
<text class="ar halo" font-size="9.2" letter-spacing="0.4" fill="#7A18D8" transform="translate(67.9,742.3) rotate(-90)" x="0" y="0">WDCN-LP</text>
<line x1="215.1" y1="723.6" x2="223.9" y2="723.6" stroke="#6C00D4" stroke-width="3.2" stroke-linecap="butt"/>
<text class="ar halo" font-size="9.2" letter-spacing="0.4" fill="#7A18D8" transform="translate(222.8,719.2) rotate(-90)" x="0" y="0">W14CY</text>
<line x1="308.3" y1="745.5" x2="317.1" y2="745.5" stroke="#6C00D4" stroke-width="3.2" stroke-linecap="butt"/>
<text class="ar halo" font-size="9.2" letter-spacing="0.4" fill="#7A18D8" transform="translate(316.0,741.1) rotate(-90)" x="0" y="0">WDWA-LP</text>
</svg>
</body></html>
